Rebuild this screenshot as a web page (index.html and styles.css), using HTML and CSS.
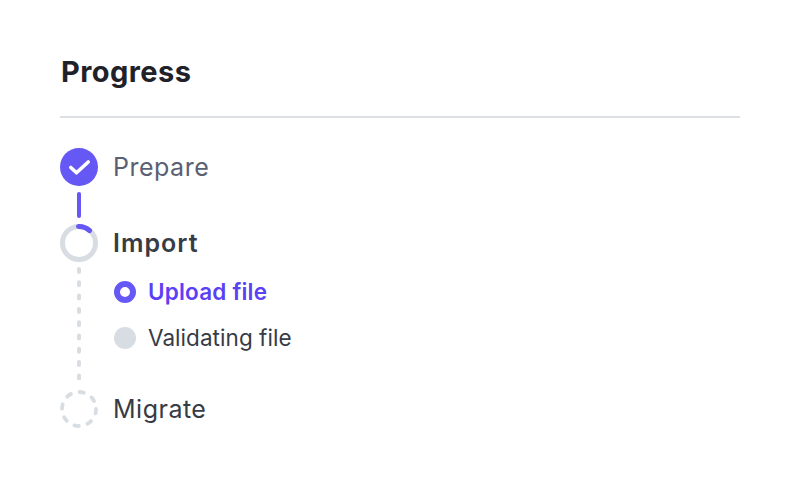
FILE: index.html
```html
<!DOCTYPE html>
<html lang="en">
<head>
    <meta charset="UTF-8">
    <meta name="viewport" content="width=device-width, initial-scale=1.0">
    <title>Progress</title>
    <link rel="stylesheet" href="styles.css">
</head>
<body>
    <div class="container">
        <h1>Progress</h1>

        <div class="step step-done">
            <svg class="step-icon" viewBox="0 0 38 38">
                <circle cx="19" cy="19" r="19" fill="#6558f5"/>
                <path d="M10.8 19.5l5.7 5.3 11.7-10.8" fill="none" stroke="#fff" stroke-width="3.6" stroke-linecap="round" stroke-linejoin="round"/>
            </svg>
            <span>Prepare</span>
        </div>

        <div class="rail-solid"></div>

        <div class="step step-current">
            <svg class="step-icon" viewBox="0 0 38 38">
                <circle cx="19" cy="19" r="16.5" fill="none" stroke="#d8dde3" stroke-width="5"/>
                <path d="M18.5 2.5a16.5 16.5 0 0 1 11 4" fill="none" stroke="#6558f5" stroke-width="5" stroke-linecap="round"/>
            </svg>
            <span>Import</span>
        </div>

        <div class="step-body">
            <svg class="rail-dashed" viewBox="0 0 4 113">
                <line x1="2" y1="2" x2="2" y2="112" stroke="#d8dde3" stroke-width="4" stroke-dasharray="3 10.3" stroke-linecap="round"/>
            </svg>
            <div class="substeps">
                <div class="substep substep-active">
                    <span class="dot"></span>
                    <span class="substep-label">Upload file</span>
                </div>
                <div class="substep">
                    <span class="dot"></span>
                    <span class="substep-label">Validating file</span>
                </div>
            </div>
        </div>

        <div class="step step-todo">
            <svg class="step-icon" viewBox="0 0 38 38">
                <circle cx="19" cy="19" r="17" fill="none" stroke="#d8dde3" stroke-width="3.8" stroke-dasharray="4.5 8.85" stroke-linecap="round"/>
            </svg>
            <span>Migrate</span>
        </div>
    </div>
</body>
</html>
```

FILE: styles.css
```css
* {
    margin: 0;
    padding: 0;
    box-sizing: border-box;
}

body {
    font-family: Inter, "Liberation Sans", sans-serif;
    background-color: #fff;
    color: #363b45;
}

.container {
    padding: 52px 60px 0;
}

h1 {
    font-size: 29px;
    line-height: 40px;
    font-weight: 700;
    letter-spacing: 0.45px;
    color: #1f2329;
    padding: 0 0 24px 1px;
    margin-bottom: 30px;
    border-bottom: 2px solid #dcdfe3;
}

/* Steps */
.step {
    display: flex;
    align-items: center;
    gap: 15px;
    height: 38px;
    font-size: 25px;
    letter-spacing: 0.5px;
}

.step-icon {
    width: 38px;
    height: 38px;
    flex: none;
}

.step-done {
    color: #5a6072;
}

.step-current {
    font-weight: 600;
    letter-spacing: 1px;
}

/* Lines between steps */
.rail-solid {
    width: 4px;
    height: 26px;
    margin: 6px 0 6px 17px;
    background-color: #6558f5;
    border-radius: 2px;
}

.rail-dashed {
    width: 4px;
    height: 113px;
    margin: 5px 0 0 17px;
    flex: none;
}

/* Substeps */
.step-body {
    display: flex;
    height: 128px;
}

.substeps {
    display: flex;
    flex-direction: column;
    gap: 22px;
    padding: 18px 0 0 33px;
}

.substep {
    display: flex;
    align-items: center;
    gap: 12px;
    height: 24px;
    font-size: 22.5px;
    letter-spacing: 0.05px;
}

.substep-label {
    margin-bottom: 2px;
}

.dot {
    width: 22px;
    height: 22px;
    border-radius: 50%;
    background-color: #d8dde3;
    flex: none;
}

.substep-active {
    color: #5b41f5;
    font-weight: 600;
    letter-spacing: 0.2px;
}

.substep-active .dot {
    background-color: #fff;
    border: 6.5px solid #6558f5;
}
```
